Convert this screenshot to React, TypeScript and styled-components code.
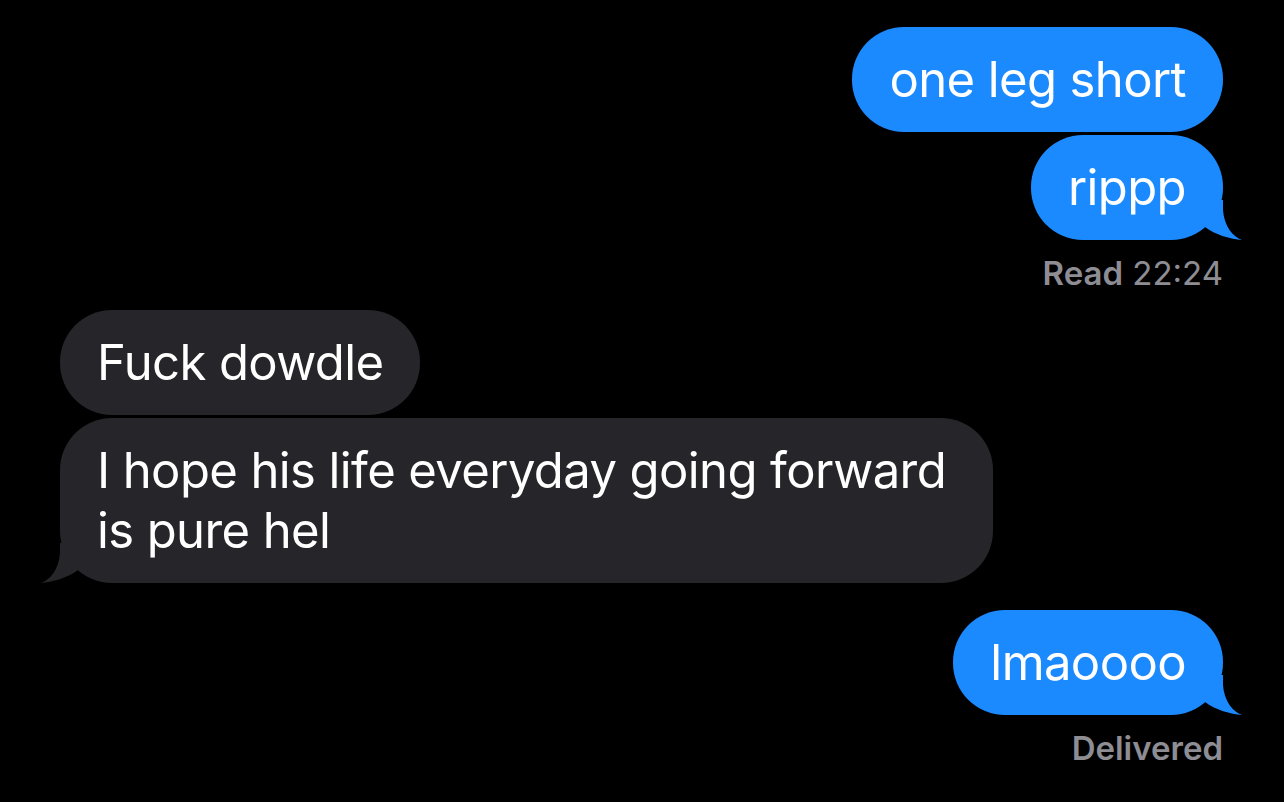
import React from 'react';
import styled, { createGlobalStyle } from 'styled-components';

const GlobalStyle = createGlobalStyle`
  html, body {
    margin: 0;
    padding: 0;
    height: 100%;
    background: #000;
  }
  body {
    font-family: Inter, "Noto Sans", "Liberation Sans", sans-serif;
    -webkit-font-smoothing: antialiased;
  }
`;

const Thread = styled.div`
  display: flex;
  flex-direction: column;
  padding: 27px 61px 0 60px;
`;

const Row = styled.div<{ $me?: boolean; $gap?: number }>`
  display: flex;
  justify-content: ${p => (p.$me ? 'flex-end' : 'flex-start')};
  margin-top: ${p => p.$gap ?? 3}px;
`;

const Bubble = styled.div<{ $me?: boolean }>`
  position: relative;
  box-sizing: border-box;
  max-width: 933px;
  padding: 23px 37px 22px;
  border-radius: 52px;
  background: ${p => (p.$me ? '#1c8aff' : '#26262a')};
  color: #fff;
  font-size: 49px;
  line-height: 60px;
  letter-spacing: -0.6px;
`;

const TailSvg = styled.svg<{ $me?: boolean }>`
  position: absolute;
  bottom: 0;
  width: 60px;
  height: 45px;
  ${p => (p.$me ? 'right: -19px;' : 'left: -19px; transform: scaleX(-1);')}
`;

const Status = styled.div<{ $gap: number }>`
  margin-top: ${p => p.$gap}px;
  text-align: right;
  color: #8d8d93;
  font-size: 33px;
  line-height: 36px;
`;

const StatusLabel = styled.span`
  font-weight: 600;
`;

const Tail = ({ me, color }: { me?: boolean; color: string }) => (
  <TailSvg $me={me} viewBox="0 0 60 45">
    <path
      d="M41 5 L41 15 C42 31 51 42 60 45 C49 44 33 40 23 32 L31 5 Z"
      fill={color}
    />
  </TailSvg>
);

const Msg = ({ me, tail, gap, children }: { me?: boolean; tail?: boolean; gap?: number; children: React.ReactNode }) => (
  <Row $me={me} $gap={gap}>
    <Bubble $me={me}>
      {children}
      {tail && <Tail me={me} color={me ? '#1c8aff' : '#26262a'} />}
    </Bubble>
  </Row>
);

export default function App() {
  return (
    <>
      <GlobalStyle />
      <Thread>
        <Msg me gap={0}>one leg short</Msg>
        <Msg me tail>rippp</Msg>
        <Status $gap={15}>
          <StatusLabel>Read</StatusLabel> 22:24
        </Status>
        <Msg gap={19}>Fuck dowdle</Msg>
        <Msg tail>I hope his life everyday going forward is pure hel</Msg>
        <Msg me tail gap={27}>lmaoooo</Msg>
        <Status $gap={15}>
          <StatusLabel>Delivered</StatusLabel>
        </Status>
      </Thread>
    </>
  );
}
